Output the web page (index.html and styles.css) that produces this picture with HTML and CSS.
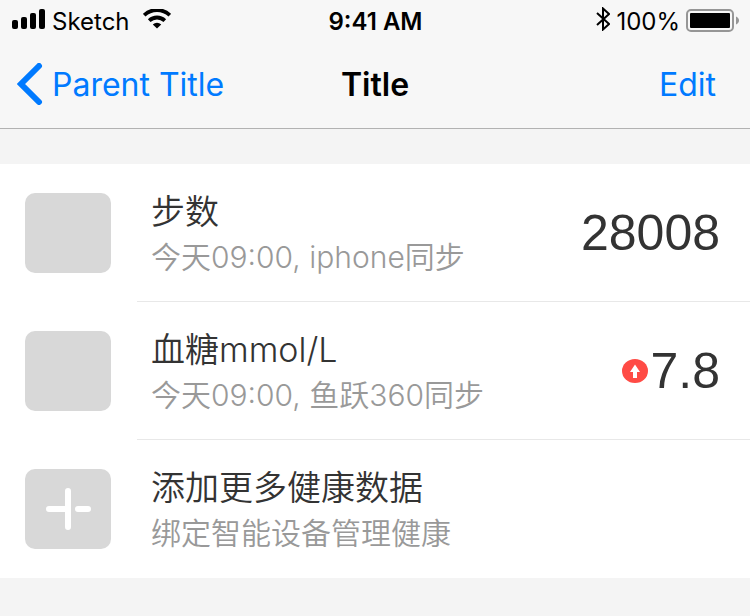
FILE: index.html
```
<!DOCTYPE html>
<html lang="zh-CN">
<head>
<meta charset="utf-8">
<meta name="viewport" content="width=device-width, initial-scale=1">
<title>Title</title>
<link rel="stylesheet" href="styles.css">
</head>
<body>
  <header class="header">
    <div class="status">
      <div class="status-left">
        <svg class="signal" width="34" height="20" viewBox="0 0 34 20">
          <rect x="0" y="11" width="6" height="9" rx="2"/>
          <rect x="9" y="8" width="6" height="12" rx="2"/>
          <rect x="18" y="4" width="6" height="16" rx="2"/>
          <rect x="27" y="0" width="6" height="20" rx="2"/>
        </svg>
        <span>Sketch</span>
        <svg class="wifi" width="28" height="20" viewBox="0 0 28 20">
          <path d="M1.200 6.200a18.500 18.500 0 0 1 25.600 0M6.200 11.600a11.400 11.400 0 0 1 15.600 0" fill="none" stroke="#000" stroke-width="3.800"/>
          <path d="M14 19.600l-4.200-4.200a6.200 6.200 0 0 1 8.400 0z"/>
        </svg>
      </div>
      <span class="time">9:41 AM</span>
      <div class="status-right">
        <svg class="bluetooth" width="14" height="24" viewBox="0 0 14 24">
          <path d="M1 6l12 11-6 5.500V1.500L13 7 1 18" fill="none" stroke="#000" stroke-width="2"/>
        </svg>
        <span>100%</span>
        <svg class="battery" width="53" height="24" viewBox="0 0 53 24">
          <rect x="1" y="1" width="46" height="21" rx="4" fill="none" stroke="#969696" stroke-width="2"/>
          <rect x="4" y="4" width="40" height="15" rx="1"/>
          <path d="M50 7.500c4 1.500 4 6.500 0 8z" fill="#969696"/>
        </svg>
      </div>
    </div>
    <nav class="nav">
      <a class="back" href="#">
        <svg width="26" height="42" viewBox="0 0 26 42">
          <path d="M22 3L4 21l18 18" fill="none" stroke="#007aff" stroke-width="6" stroke-linecap="round"/>
        </svg>
        <span>Parent Title</span>
      </a>
      <h1 class="nav-title">Title</h1>
      <a class="edit" href="#">Edit</a>
    </nav>
  </header>

  <main class="list">
    <div class="item">
      <div class="thumb"></div>
      <div class="item-body">
        <div class="item-text">
          <h2>步数</h2>
          <p>今天09:00, iphone同步</p>
        </div>
        <div class="value">28008</div>
      </div>
    </div>
    <div class="item">
      <div class="thumb"></div>
      <div class="item-body">
        <div class="item-text">
          <h2>血糖mmol/L</h2>
          <p>今天09:00, 鱼跃360同步</p>
        </div>
        <div class="value">
          <svg width="26" height="24" viewBox="0 0 26 24">
            <ellipse cx="13" cy="12" rx="13" ry="12" fill="#ff4b45"/>
            <path d="M13 5.500l5 7.500h-3v6h-4v-6H8z" fill="#fff"/>
          </svg>
          <span>7.8</span>
        </div>
      </div>
    </div>
    <div class="item">
      <div class="thumb">
        <svg width="46" height="42" viewBox="0 0 46 42">
          <path d="M23 3v36M4 21h18M33 21h10" fill="none" stroke="#fff" stroke-width="6" stroke-linecap="round"/>
        </svg>
      </div>
      <div class="item-body">
        <div class="item-text">
          <h2>添加更多健康数据</h2>
          <p>绑定智能设备管理健康</p>
        </div>
      </div>
    </div>
  </main>
</body>
</html>
```
FILE: styles.css
```
*{
  box-sizing: border-box;
}

body{
  margin: 0;
  background-color: #f4f4f4;
  font-family: Inter, "Noto Sans CJK SC", sans-serif;
  color: #333;
}

h1, h2, p{
  margin: 0;
}

svg{
  display: block;
  flex-shrink: 0;
}

.header{
  background-color: #f7f7f7;
  border-bottom: 1px solid #b2b2b2;
  color: #000;
}

.status, .nav{
  display: grid;
  grid-template-columns: 1fr auto 1fr;
  align-items: center;
}

.status{
  height: 40px;
  padding: 0 11px 0 12px;
  font-size: 24px;
  line-height: 40px;
}

.status-left, .status-right{
  display: flex;
  align-items: flex-start;
}

.status-left{
  gap: 6px;
}

.status-right{
  justify-content: flex-end;
  gap: 6px;
}

.status span{
  padding-top: 2px;
}

.signal, .battery{
  margin-top: 9px;
}

.wifi{
  margin: 9px 0 0 7px;
}

.bluetooth{
  margin-top: 7px;
}

.time{
  font-weight: 600;
}

.nav{
  height: 88px;
  padding: 0 17px;
  font-size: 32px;
}

.nav a{
  color: #007aff;
  text-decoration: none;
}

.back{
  display: flex;
  align-items: center;
  gap: 9px;
}

.nav-title{
  font-size: 32px;
  font-weight: 600;
}

.edit{
  padding-right: 17px;
  text-align: right;
}

.list{
  margin-top: 35px;
  background-color: #fff;
}

.item{
  display: flex;
  align-items: center;
  height: 138px;
  padding-left: 25px;
}

.thumb{
  display: flex;
  align-items: center;
  justify-content: center;
  flex-shrink: 0;
  width: 86px;
  height: 80px;
  margin-right: 26px;
  border-radius: 10px;
  background-color: #d8d8d8;
}

.item-body{
  display: flex;
  flex: 1;
  align-items: center;
  justify-content: space-between;
  height: 100%;
  padding: 0 30px 0 14px;
  border-bottom: 1px solid #e8e8e8;
}

.item:last-child .item-body{
  border-bottom: 0;
}

.item-text h2{
  font-size: 34px;
  font-weight: 350;
  line-height: 48px;
}

.item-text p{
  font-size: 30px;
  font-weight: 350;
  line-height: 42px;
  color: #999;
}

.value{
  display: flex;
  align-items: center;
  gap: 2px;
  font-family: "Liberation Sans", Arial, sans-serif;
  font-size: 50px;
}
```
